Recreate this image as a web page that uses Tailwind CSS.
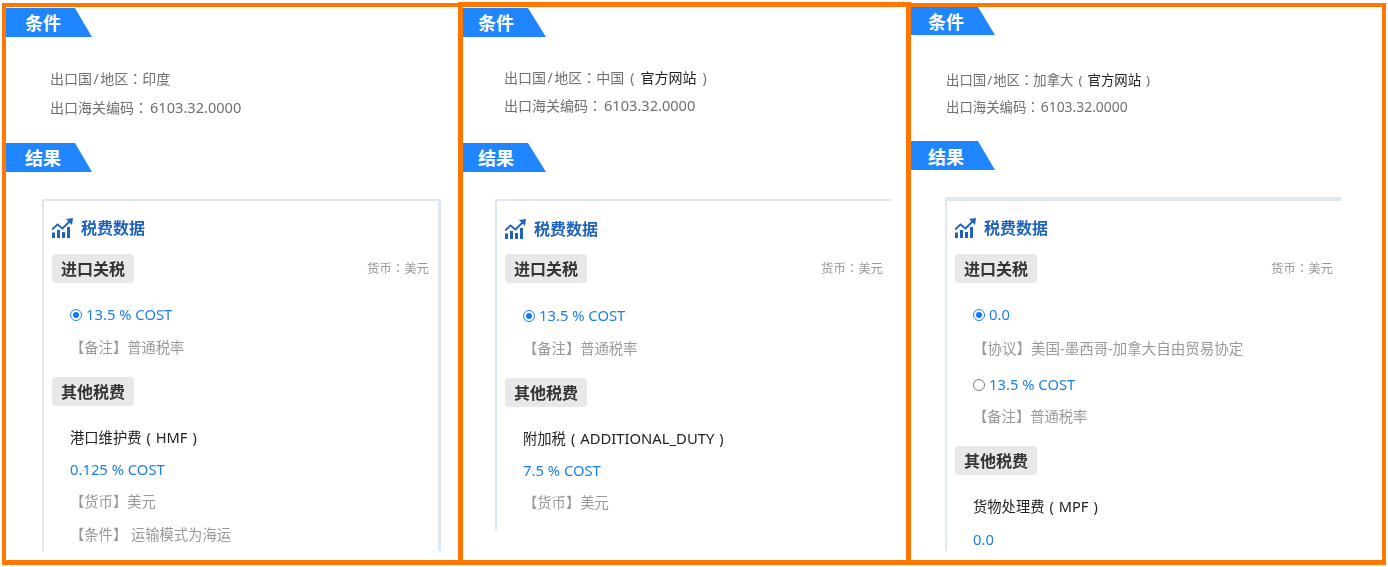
<!doctype html>
<html lang="zh-CN"><head><meta charset="utf-8"><script src="https://cdn.jsdelivr.net/npm/@tailwindcss/browser@4"></script></head>
<body class="bg-white overflow-hidden font-['Noto_Sans','Noto_Sans_CJK_SC',sans-serif] text-sm text-[#707070]">
<div class="w-[1388px] h-[567px] flex items-start pl-[2px] overflow-hidden blur-[0.35px]">

<!-- Panel 1 -->
<section class="w-[460px] h-[562px] mt-[3px] border-4 border-b-[5px] border-[#ff7700] shrink-0 overflow-hidden">
  <div class="mt-[1px] w-[86px] h-[29px] bg-[#1f86ff] [clip-path:polygon(0_0,69px_0,86px_100%,0_100%)] pl-[19px] text-lg leading-[31px] font-bold text-white">条件</div>
  <div class="mt-[27px] mb-[21px] ml-[44px] leading-[29px]">
    <p class="h-[29px]">出口国<span class="px-[1.5px]">/</span>地区<span lang="zh-TW" class="font-['Noto_Sans_CJK_TC']">：</span>印度</p>
    <p class="h-[29px]">出口海关编码<span lang="zh-TW" class="font-['Noto_Sans_CJK_TC']">：</span><span class="pl-[2px] text-[14.6px]">6103.32.0000</span></p>
  </div>
  <div class="w-[86px] h-[29px] bg-[#1f86ff] [clip-path:polygon(0_0,69px_0,86px_100%,0_100%)] pl-[19px] text-lg leading-[31px] font-bold text-white">结果</div>
  <div class="mt-[27px] ml-[36px] w-[399px] h-[352px] border-t-2 border-l-2 border-r-[3px] border-[#dfe8f0] pl-2 pr-[9px] overflow-hidden">
    <div class="mt-[15px] h-6 flex items-center gap-2 text-base font-bold text-[#1f62bd]">
      <svg class="w-[21px] h-5" viewBox="0 0 21 20" fill="#1f62bd"><path d="M0 14.5h3V20H0zM5 12h3v8H5zM10 14h3v6h-3zM15 9h3v11h-3z"/><path d="M0 11.5 5.5 6.5 10.5 10.5 18 3" fill="none" stroke="#1f62bd" stroke-width="1.8"/><path d="M14 1 21 0 20 7z"/></svg>
      <span>税费数据</span>
    </div>
    <div class="mt-[14px] flex justify-between items-center">
      <div class="w-[82px] h-[29px] rounded-sm bg-[#e8e8e8] text-center text-base leading-[30px] font-bold text-[#333]">进口关税</div>
      <span class="text-[12.4px] text-[#999]">货币<span lang="zh-TW" class="font-['Noto_Sans_CJK_TC']">：</span>美元</span>
    </div>
    <div class="mt-4 pl-[18px] text-[#999] text-[14.3px]">
      <div class="h-[33px] pb-[2px] flex items-center gap-1 text-[#1f7fe8] text-[14.8px]"><span class="size-3 rounded-full border border-[#1f7fff] p-[2px]"><span class="block size-full rounded-full bg-[#0f78ff]"></span></span>13.5 % COST</div>
      <div class="h-[32px] leading-[32px]">【备注】普通税率</div>
    </div>
    <div class="mt-[13px] w-[82px] h-[29px] rounded-sm bg-[#e8e8e8] text-center text-base leading-[30px] font-bold text-[#333]">其他税费</div>
    <div class="mt-[15px] pl-[18px] text-[#999] leading-[32px] text-[14.3px]">
      <div class="h-[32.5px] text-[#222]">港口维护费<span class="mx-[5px]">(</span><span class="text-[14.6px]">HMF</span><span class="mx-[5px]">)</span></div>
      <div class="h-[32.5px] text-[#1f7fe8] text-[14.8px] leading-[31px]">0.125 % COST</div>
      <div class="h-[32.5px]">【货币】美元</div>
      <div class="h-[32.5px]">【条件】 运输模式为海运</div>
    </div>
  </div>
</section>

<!-- Panel 2 -->
<section class="w-[453px] h-[563px] mt-[2px] -ml-[4px] border-[5px] border-[#ff7700] shrink-0 overflow-hidden">
  <div class="mt-[1px] w-[83px] h-[29px] bg-[#1f86ff] [clip-path:polygon(0_0,65px_0,83px_100%,0_100%)] pl-[15px] text-lg leading-[31px] font-bold text-white">条件</div>
  <div class="mt-[26px] mb-[24px] ml-[41px] leading-[28px]">
    <p class="h-[28px]">出口国<span class="px-[1.5px]">/</span>地区<span lang="zh-TW" class="font-['Noto_Sans_CJK_TC']">：</span>中国<span class="mx-[6px]">(</span><span class="text-[#222]">官方网站</span><span class="mx-[6px]">)</span></p>
    <p class="h-[28px]">出口海关编码<span lang="zh-TW" class="font-['Noto_Sans_CJK_TC']">：</span><span class="pl-[2px] text-[14.6px]">6103.32.0000</span></p>
  </div>
  <div class="w-[83px] h-[29px] bg-[#1f86ff] [clip-path:polygon(0_0,65px_0,83px_100%,0_100%)] pl-[15px] text-lg leading-[31px] font-bold text-white">结果</div>
  <div class="mt-[27px] ml-[32px] w-[396px] h-[332px] border-t-2 border-l-2 border-[#dfe8f0] px-2 overflow-hidden">
    <div class="mt-[16px] h-6 flex items-center gap-2 text-base font-bold text-[#1f62bd]">
      <svg class="w-[21px] h-5" viewBox="0 0 21 20" fill="#1f62bd"><path d="M0 14.5h3V20H0zM5 12h3v8H5zM10 14h3v6h-3zM15 9h3v11h-3z"/><path d="M0 11.5 5.5 6.5 10.5 10.5 18 3" fill="none" stroke="#1f62bd" stroke-width="1.8"/><path d="M14 1 21 0 20 7z"/></svg>
      <span>税费数据</span>
    </div>
    <div class="mt-[13px] flex justify-between items-center">
      <div class="w-[82px] h-[29px] rounded-sm bg-[#e8e8e8] text-center text-base leading-[30px] font-bold text-[#333]">进口关税</div>
      <span class="text-[12.4px] text-[#999]">货币<span lang="zh-TW" class="font-['Noto_Sans_CJK_TC']">：</span>美元</span>
    </div>
    <div class="mt-[17px] pl-[18px] text-[#999] text-[14.3px]">
      <div class="h-[33px] pb-[2px] flex items-center gap-1 text-[#1f7fe8] text-[14.8px]"><span class="size-3 rounded-full border border-[#1f7fff] p-[2px]"><span class="block size-full rounded-full bg-[#0f78ff]"></span></span>13.5 % COST</div>
      <div class="h-[32px] leading-[32px]">【备注】普通税率</div>
    </div>
    <div class="mt-[13px] w-[82px] h-[29px] rounded-sm bg-[#e8e8e8] text-center text-base leading-[30px] font-bold text-[#333]">其他税费</div>
    <div class="mt-[14.5px] pl-[18px] text-[#999] leading-[32px] text-[14.3px]">
      <div class="h-[32.5px] text-[#222]">附加税<span class="mx-[5px]">(</span><span class="text-[14.8px]">ADDITIONAL_DUTY</span><span class="mx-[5px]">)</span></div>
      <div class="h-[32.5px] text-[#1f7fe8] text-[14.8px]">7.5 % COST</div>
      <div class="h-[32.5px]">【货币】美元</div>
    </div>
  </div>
</section>

<!-- Panel 3 -->
<section class="w-[480px] h-[562px] mt-[3px] -ml-[5px] border-t-4 border-r-4 border-b-[5px] border-l-[5px] border-[#ff7700] shrink-0 overflow-hidden">
  <div class="w-[84px] h-[28px] bg-[#1f86ff] [clip-path:polygon(0_0,67px_0,84px_100%,0_100%)] pl-[17px] text-lg leading-[30px] font-bold text-white">条件</div>
  <div class="mt-[31px] mb-[21px] ml-[35px] leading-[27px] text-[13.4px]">
    <p class="h-[27px]">出口国<span class="px-px">/</span>地区<span lang="zh-TW" class="font-['Noto_Sans_CJK_TC']">：</span>加拿大<span class="mx-[5px]">(</span><span class="text-[#222]">官方网站</span><span class="mx-[5px]">)</span></p>
    <p class="h-[27px]">出口海关编码<span lang="zh-TW" class="font-['Noto_Sans_CJK_TC']">：</span><span class="pl-px text-[13.9px]">6103.32.0000</span></p>
  </div>
  <div class="w-[84px] h-[29px] bg-[#1f86ff] [clip-path:polygon(0_0,67px_0,84px_100%,0_100%)] pl-[17px] text-lg leading-[33px] font-bold text-white">结果</div>
  <div class="mt-[27px] ml-[34px] w-[396px] h-[354px] border-t-4 border-l-2 border-[#dfe8f0] px-2 overflow-hidden">
    <div class="mt-[15px] h-6 flex items-center gap-2 text-base font-bold text-[#1f62bd]">
      <svg class="w-[21px] h-5" viewBox="0 0 21 20" fill="#1f62bd"><path d="M0 14.5h3V20H0zM5 12h3v8H5zM10 14h3v6h-3zM15 9h3v11h-3z"/><path d="M0 11.5 5.5 6.5 10.5 10.5 18 3" fill="none" stroke="#1f62bd" stroke-width="1.8"/><path d="M14 1 21 0 20 7z"/></svg>
      <span>税费数据</span>
    </div>
    <div class="mt-[14px] flex justify-between items-center">
      <div class="w-[82px] h-[29px] rounded-sm bg-[#e8e8e8] text-center text-base leading-[30px] font-bold text-[#333]">进口关税</div>
      <span class="text-[12.4px] text-[#999]">货币<span lang="zh-TW" class="font-['Noto_Sans_CJK_TC']">：</span>美元</span>
    </div>
    <div class="mt-4 pl-[18px] text-[#999] text-[14.3px]">
      <div class="h-[33px] pb-[2px] flex items-center gap-1 text-[#1f7fe8] text-[14.8px]"><span class="size-3 rounded-full border border-[#1f7fff] p-[2px]"><span class="block size-full rounded-full bg-[#0f78ff]"></span></span>0.0</div>
      <div class="h-[32px] leading-[32px] text-[14.5px]">【协议】美国-墨西哥-加拿大自由贸易协定</div>
      <div class="mt-[5px] h-[32px] flex items-center gap-1 text-[#1f7fe8] text-[14.8px]"><span class="size-3 rounded-full border border-[#777]"></span>13.5 % COST</div>
      <div class="h-[32px] leading-[32px]">【备注】普通税率</div>
    </div>
    <div class="mt-[13px] w-[82px] h-[29px] rounded-sm bg-[#e8e8e8] text-center text-base leading-[30px] font-bold text-[#333]">其他税费</div>
    <div class="mt-[15px] pl-[18px] leading-[32px] text-[14.3px]">
      <div class="h-[32.5px] text-[#222]">货物处理费<span class="mx-[5px]">(</span><span class="text-[14.6px]">MPF</span><span class="mx-[5px]">)</span></div>
      <div class="h-[32.5px] text-[#1f7fe8] text-[14.8px]">0.0</div>
    </div>
  </div>
</section>
</div>
</body></html>
